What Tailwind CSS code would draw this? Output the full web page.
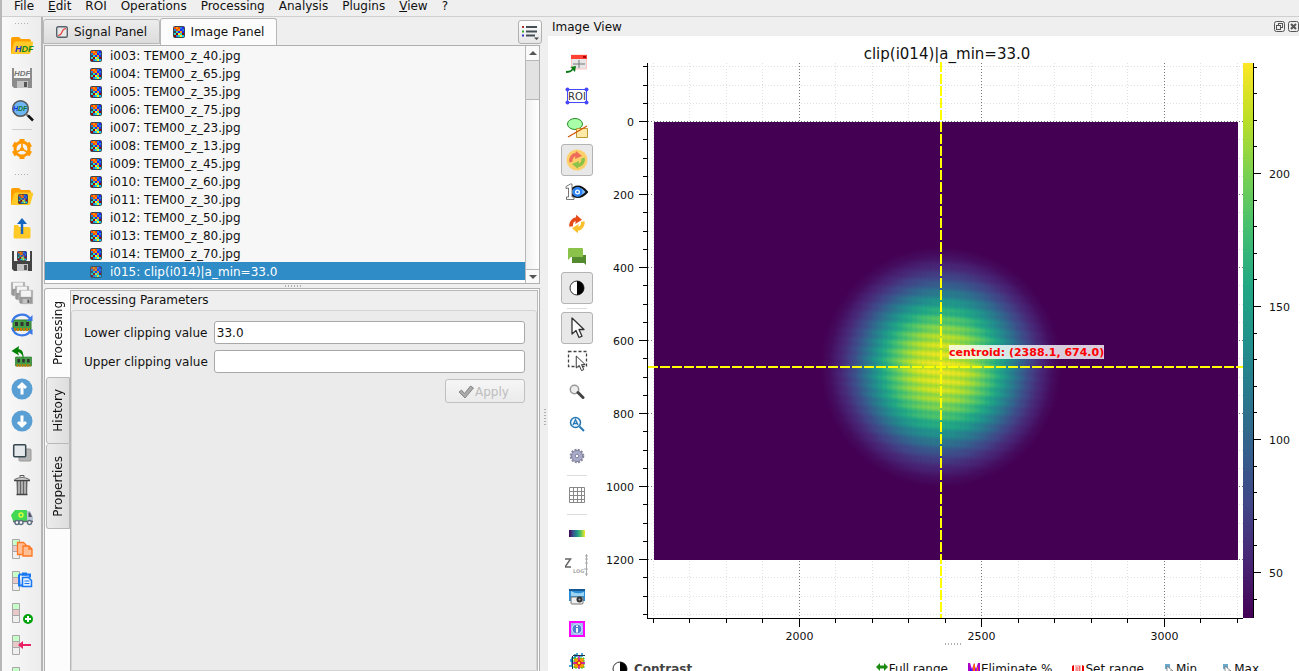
<!DOCTYPE html>
<html lang="en">
<head>
    <meta charset="UTF-8">
    <meta name="viewport" content="width=device-width, initial-scale=1.0">
    <title>DataLab - Image Panel</title>
    <script src="https://cdn.jsdelivr.net/npm/@tailwindcss/browser@4"></script>
</head>
<body class="h-screen overflow-hidden flex flex-col bg-[#efefef] border-l-2 border-[#b8b8b8] font-['DejaVu_Sans',sans-serif] text-xs text-[#111]">

    <!-- Shared icons -->
    <svg class="hidden">
        <symbol id="pixels" viewBox="0 0 12 12">
            <rect width="12" height="12" rx="2" fill="#3a4750"/>
            <path fill="#f40" d="M1 1h2v2H1zM5 1h2v2H5zM3 3h2v2H3z"/>
            <path fill="#f90" d="M3 1h2v2H3zM5 3h2v2H5zM7 5h2v2H7z"/>
            <path fill="#22f" d="M7 3h2v2H7zM9 1h2v2H9zM5 5h2v2H5zM9 5h2v2H9z"/>
            <path fill="#28d" d="M7 1h2v2H7zM9 3h2v2H9zM1 3h2v2H1zM3 9h2v2H3z"/>
            <path fill="#2dc" d="M3 5h2v2H3zM7 7h2v2H7zM1 7h2v2H1zM5 9h2v2H5z"/>
            <path fill="#fe2" d="M5 7h2v2H5zM7 9h2v2H7z"/>
            <path fill="#900" d="M1 9h2v2H1zM9 7h2v2H9zM3 7h2v2H3z"/>
            <path fill="#0cf" d="M9 9h2v2H9z"/>
        </symbol>
        <symbol id="folder" viewBox="0 0 24 24">
            <path d="M1 20V5q0-2 2-2h6l2 2h8q2 0 2 2v2" fill="#ffa000"/>
            <path d="M1 20 4 9q.5-1.500 2-1.500h16q1.500 0 1 2l-2.500 9q-.5 1.500-2 1.500H2q-1 0-1-1" fill="#ffca28"/>
        </symbol>
        <symbol id="stack" viewBox="0 0 24 24">
            <rect x="2.500" y="2.500" width="7" height="6" fill="#c8ffc8"/>
            <rect x="2.500" y="8.500" width="7" height="6" fill="#e8c8c8"/>
            <rect x="2.500" y="14.500" width="7" height="7" fill="#f0f0f0"/>
            <path d="M2.500 2.500h7v19h-7zM2.500 8.500h7M2.500 14.500h7" fill="none" stroke="#a8a8a8"/>
        </symbol>
        <symbol id="floppy" viewBox="0 0 24 24">
            <path d="M2 2h20v20H4l-2-2z" fill="currentColor"/>
            <path d="M4 2h16v10H4z" fill="#f4f4f4"/>
            <path d="M7 15h11v7H7z" fill="#c4c4c4"/>
            <path d="M14 16h3v5h-3z" fill="#555"/>
        </symbol>
        <symbol id="cursor" viewBox="0 0 24 24">
            <path d="M7 2v16l4-3.500 3 7 3-1.300-3-6.700h5z" fill="#fff" stroke="#333" stroke-width="1.300" stroke-linejoin="round"/>
        </symbol>
        <symbol id="ram" viewBox="0 0 24 24">
            <path d="M3 7h18v10H3z" fill="#43a047" stroke="#2e7d32"/>
            <path d="M5 9h3v4H5zM10.500 9h3v4h-3zM16 9h3v4h-3z" fill="#333"/>
            <path d="M4 16.500h16" stroke="#c77800" stroke-width="3" stroke-dasharray="2 1"/>
        </symbol>
    </svg>

    <!-- Menu bar -->
    <nav class="shrink-0 h-[17px] border-b border-[#cfcfcf] pl-3 pb-1 flex gap-[14px] leading-3">
        <button>File</button>
        <button><u>E</u>dit</button>
        <button>ROI</button>
        <button>Operations</button>
        <button>Processing</button>
        <button>Analysis</button>
        <button>Plugins</button>
        <button><u>V</u>iew</button>
        <button>?</button>
    </nav>

    <main class="flex-1 min-h-0 flex">

        <!-- Main toolbar -->
        <aside class="w-[41px] shrink-0 overflow-hidden flex flex-col items-center pt-[5px] bg-linear-to-r from-[#fafafa] to-[#ececec] border-r-2 border-[#b4b4b4] *:shrink-0">
            <div class="h-1 w-4 mb-1 bg-[radial-gradient(#b0b0b0_1px,transparent_1px)] bg-size-[3px_3px]"></div>
            <button aria-label="Open HDF5" class="size-8 grid place-items-center">
                <svg class="size-6"><use href="#folder"/><text x="5" y="18" font-size="9" font-weight="bold" font-style="italic" font-family="Liberation Sans" fill="#1338d8">H<tspan fill="#118822">DF</tspan></text></svg>
            </button>
            <button aria-label="Save HDF5" class="size-8 grid place-items-center text-[#8c8c8c]">
                <svg class="size-6"><use href="#floppy"/><text x="4" y="10" font-size="8" font-weight="bold" font-style="italic" font-family="Liberation Sans" fill="#777">HDF</text></svg>
            </button>
            <button aria-label="Browse HDF5" class="size-8 grid place-items-center">
                <svg class="size-6" viewBox="0 0 24 24"><circle cx="10.500" cy="10.500" r="7.800" fill="#6fb7f2" stroke="#555" stroke-width="1.500"/><path d="m16 16 2 2" stroke="#777" stroke-width="2"/><path d="m18 17.500 5 5" stroke="#111" stroke-width="2.500"/><text x="3" y="13" font-size="7" font-weight="bold" font-style="italic" font-family="Liberation Sans" fill="#1338d8">H<tspan fill="#117733">DF</tspan></text></svg>
            </button>
            <div class="w-5 my-[3px] h-px bg-[#cfcfcf]"></div>
            <button aria-label="Settings" class="size-8 grid place-items-center">
                <svg class="size-6" viewBox="0 0 24 24" fill="none" stroke="#ff9800"><circle cx="12" cy="12" r="7" stroke-width="3"/><path d="M12 5V2M12 22v-3M5.900 8.500 3.300 7M20.700 17l-2.600-1.500M5.900 15.500 3.300 17M20.700 7l-2.600 1.500" stroke-width="5"/><path d="M12 12V6M12 12l5 3M12 12l-5 3" stroke-width="1.700"/><circle cx="12" cy="12" r="1.500" fill="#ff9800"/></svg>
            </button>
            <div class="h-1 w-4 mt-2 mb-1 bg-[radial-gradient(#b0b0b0_1px,transparent_1px)] bg-size-[3px_3px]"></div>
            <button aria-label="Open image" class="size-8 grid place-items-center">
                <svg class="size-6"><use href="#folder"/><use href="#pixels" x="8" y="9" width="10" height="10"/></svg>
            </button>
            <button aria-label="Import" class="size-8 grid place-items-center">
                <svg class="size-6" viewBox="0 0 24 24"><path d="M4 8h4l1 2h10q1.500 0 1.500 1.500V20q0 1.500-1.500 1.500H5Q3.500 21.500 3.500 20z" fill="#ffca28"/><path d="M12 17V5" stroke="#1565c0" stroke-width="2.500"/><path d="m12 1-5 6h10z" fill="#1565c0"/></svg>
            </button>
            <button aria-label="Save image" class="size-8 grid place-items-center text-[#444]">
                <svg class="size-6"><use href="#floppy"/><use href="#pixels" x="7" y="2" width="10" height="10"/></svg>
            </button>
            <button aria-label="Save all" class="size-8 grid place-items-center text-[#999]">
                <svg class="size-6" stroke="#aaa" stroke-width=".5"><use href="#floppy" x="0" y="0" width="16" height="16"/><use href="#floppy" x="4" y="4" width="16" height="16"/><use href="#floppy" x="8" y="8" width="16" height="16"/></svg>
            </button>
            <button aria-label="Reload" class="size-8 grid place-items-center">
                <svg class="size-6" viewBox="0 0 24 24"><use href="#ram"/><path d="M2 9.500A10.300 10.300 0 0 1 20 5.500M21 17A10.300 10.300 0 0 1 2 14.500" fill="none" stroke="#3b78e7" stroke-width="2.200"/><path d="M22.500 2v6h-6z" fill="#3b78e7"/><path d="M22.500 16v6l-5-3z" fill="#3b78e7"/></svg>
            </button>
            <button aria-label="Load from memory" class="size-8 grid place-items-center">
                <svg class="size-6" viewBox="0 0 24 24"><use href="#ram" x="3" y="6" width="21" height="21"/><path d="M13 15Q13 8 8 7l1 3.500L1.500 6 9 1l-.5 3Q15 5 13 15" fill="#008000"/></svg>
            </button>
            <button aria-label="Move up" class="size-8 grid place-items-center">
                <svg class="size-6" viewBox="0 0 24 24"><circle cx="12" cy="12" r="10.500" fill="#5a9fd4"/><path d="M12 17.500V9M8 11l4-4 4 4" fill="none" stroke="#fff" stroke-width="3"/></svg>
            </button>
            <button aria-label="Move down" class="size-8 grid place-items-center">
                <svg class="size-6" viewBox="0 0 24 24"><circle cx="12" cy="12" r="10.500" fill="#5a9fd4"/><path d="M12 6.500V15M8 13l4 4 4-4" fill="none" stroke="#fff" stroke-width="3"/></svg>
            </button>
            <button aria-label="Duplicate" class="size-8 grid place-items-center">
                <svg class="size-6" viewBox="0 0 24 24"><rect x="9" y="8" width="12" height="12" rx="1" fill="#b4b4b4" stroke="#999"/><rect x="3.700" y="3.700" width="12" height="12" rx="1" fill="#e4e8ea" stroke="#37474f" stroke-width="1.500"/></svg>
            </button>
            <button aria-label="Remove" class="size-8 grid place-items-center">
                <svg class="size-6" viewBox="0 0 24 24"><path d="M6 8h12l-1 13H7z" fill="#bbb"/><path d="M7.500 8v13M10.500 8v13M13.500 8v13M16.500 8v13" stroke="#666" stroke-width="1.300"/><path d="M4.500 6.500q7.500-4 15 0" fill="#ddd" stroke="#666"/><path d="M4 7.500h16M6.500 21.500h11" stroke="#444" stroke-width="1.500"/><path d="M10 4V2.500h4V4" stroke="#555" fill="none"/></svg>
            </button>
            <button aria-label="Delete all" class="size-8 grid place-items-center">
                <svg class="size-6" viewBox="0 0 24 24"><path d="M1 10 5 5h12v11H3z" fill="#43d854"/><path d="M17 6h3l3 6v4h-6z" fill="#b8c4d4"/><path d="M18.500 7.500h1.500l2 4.500h-3.500z" fill="#556"/><path d="M3 16.500h20" stroke="#667" stroke-width="1.500"/><circle cx="11" cy="10" r="2" fill="none" stroke="#dfff40" stroke-width="1.300"/><g fill="#fff" stroke="#607080" stroke-width="1.500"><circle cx="7" cy="17.500" r="2"/><circle cx="11" cy="17.500" r="2"/><circle cx="19.500" cy="17.500" r="2"/></g></svg>
            </button>
            <button aria-label="Copy metadata" class="size-8 grid place-items-center">
                <svg class="size-6"><use href="#stack"/><g fill="#ffbe94" stroke="#ff7722" stroke-width="1.300"><path d="M7.500 5.500h6l3 3v9h-9z"/><path d="M13 9h6l3 3v7h-9z"/><path d="M19 9v3h3" fill="none"/></g></svg>
            </button>
            <button aria-label="Paste metadata" class="size-8 grid place-items-center">
                <svg class="size-6"><use href="#stack"/><path d="M9 5.500h11v3M9 5.500V16.500h3" fill="#9cc4ff" stroke="#1877f2" stroke-width="2"/><path d="M12 3.500h5v3h-5z" fill="#1877f2"/><path d="M12.500 8.500h6l3 3v6h-9z" fill="#e4f0ff" stroke="#1877f2" stroke-width="1.500"/><path d="M14.500 12h5M14.500 14.500h5" stroke="#1877f2"/></svg>
            </button>
            <button aria-label="Add metadata" class="size-8 grid place-items-center">
                <svg class="size-6"><use href="#stack"/><circle cx="18" cy="18" r="5" fill="#00a30d"/><path d="M18 15v6M15 18h6" stroke="#fff" stroke-width="2"/></svg>
            </button>
            <button aria-label="Import metadata" class="size-8 grid place-items-center">
                <svg class="size-6"><use href="#stack"/><path d="M21 12H11" stroke="#e91e63" stroke-width="2"/><path d="m8 12 5-4v8z" fill="#e91e63"/></svg>
            </button>
            <button aria-label="Export metadata" class="size-8 grid place-items-center">
                <svg class="size-6"><use href="#stack"/></svg>
            </button>
        </aside>

        <!-- Signal / image panels -->
        <section class="w-[499px] shrink-0 flex flex-col">
            <div class="h-7 shrink-0 flex items-end">
                <button class="h-[25px] w-[117px] mb-px border border-[#b8b8b8] rounded-t-[3px] bg-linear-to-b from-[#ececec] to-[#dcdcdc] flex items-center justify-center gap-[6px]">
                    <svg class="size-3" viewBox="0 0 12 12"><rect x=".7" y=".7" width="10.600" height="10.600" rx="1.500" fill="#e8e8e8" stroke="#56626a" stroke-width="1.400"/><path d="M2 9.500C8 9 4 3 10 2.500" fill="none" stroke="#e04848" stroke-width="1.200"/></svg>
                    Signal Panel
                </button>
                <button class="h-[27px] w-[117px] border border-b-0 border-[#b8b8b8] rounded-t-[3px] bg-[#fcfcfc] flex items-center justify-center gap-[6px]">
                    <svg class="size-3"><use href="#pixels"/></svg>
                    Image Panel
                </button>
                <button aria-label="Panel options" class="ml-auto mb-px size-6 border border-[#b0b0b0] rounded-[3px] bg-linear-to-b from-white to-[#e6e6e6] grid place-items-center">
                    <svg class="size-5" viewBox="0 0 20 20"><path d="M6 5h11M6 9.500h11M6 13.500h9" stroke="#444f55" stroke-width="1.800"/><path d="M2 4h2v2H2z" fill="#a33"/><path d="M2 8.500h2v2H2z" fill="#3a3"/><path d="M2 12.500h2v2H2z" fill="#33c"/><path d="m14 15.500 5 0-2.500 2.500z" fill="#444"/></svg>
                </button>
            </div>

            <div class="h-[239px] shrink-0 mr-[2px] ml-px border border-[#b0b0b0] bg-white flex">
                <ul class="flex-1 *:h-[18px] *:pt-[2px] *:pl-[45px] *:flex *:items-center *:gap-2 odd:*:bg-[#f7f7f7]">
                    <li><svg class="size-3"><use href="#pixels"/></svg>i003: TEM00_z_40.jpg</li>
                    <li><svg class="size-3"><use href="#pixels"/></svg>i004: TEM00_z_65.jpg</li>
                    <li><svg class="size-3"><use href="#pixels"/></svg>i005: TEM00_z_35.jpg</li>
                    <li><svg class="size-3"><use href="#pixels"/></svg>i006: TEM00_z_75.jpg</li>
                    <li><svg class="size-3"><use href="#pixels"/></svg>i007: TEM00_z_23.jpg</li>
                    <li><svg class="size-3"><use href="#pixels"/></svg>i008: TEM00_z_13.jpg</li>
                    <li><svg class="size-3"><use href="#pixels"/></svg>i009: TEM00_z_45.jpg</li>
                    <li><svg class="size-3"><use href="#pixels"/></svg>i010: TEM00_z_60.jpg</li>
                    <li><svg class="size-3"><use href="#pixels"/></svg>i011: TEM00_z_30.jpg</li>
                    <li><svg class="size-3"><use href="#pixels"/></svg>i012: TEM00_z_50.jpg</li>
                    <li><svg class="size-3"><use href="#pixels"/></svg>i013: TEM00_z_80.jpg</li>
                    <li><svg class="size-3"><use href="#pixels"/></svg>i014: TEM00_z_70.jpg</li>
                    <li class="bg-[#308cc6]! text-white"><svg class="size-3 opacity-75"><use href="#pixels"/></svg>i015: clip(i014)|a_min=33.0</li>
                </ul>
                <div class="w-[14px] border-l border-[#b8b8b8] flex flex-col bg-linear-to-r from-[#f0f0f0] to-white">
                    <button aria-label="Scroll up" class="h-[14px] bg-[#fafafa] grid place-items-center"><svg class="w-2 h-1" viewBox="0 0 8 4"><path d="M0 4h8L4 0z" fill="#555"/></svg></button>
                    <div class="h-10 border-y border-[#b8b8b8] bg-[#e2e2e2]"></div>
                    <button aria-label="Scroll down" class="mt-auto h-[14px] border-t border-[#b8b8b8] bg-[#fafafa] grid place-items-center"><svg class="w-2 h-1" viewBox="0 0 8 4"><path d="M0 0h8L4 4z" fill="#555"/></svg></button>
                </div>
            </div>

            <div class="h-1 w-[18px] mx-auto shrink-0 bg-[radial-gradient(#b0b0b0_1px,transparent_1px)] bg-size-[3px_4px]"></div>

            <!-- Object properties -->
            <div class="flex-1 min-h-0 mr-[2px] ml-px border-t border-x border-[#b0b0b0] rounded-tl-[3px] bg-[#fcfcfc] flex">
                <div class="w-[25px] flex flex-col items-end">
                    <button class="w-[25px] h-[88px] grid place-items-center"><span class="[writing-mode:vertical-rl] rotate-180">Processing</span></button>
                    <button class="w-6 h-[67px] border border-[#b8b8b8] rounded-l-[3px] bg-linear-to-r from-[#ececec] to-[#dedede] grid place-items-center"><span class="[writing-mode:vertical-rl] rotate-180">History</span></button>
                    <button class="w-6 h-[85px] border border-t-0 border-[#b8b8b8] rounded-l-[3px] bg-linear-to-r from-[#ececec] to-[#dedede] grid place-items-center"><span class="[writing-mode:vertical-rl] rotate-180">Properties</span></button>
                </div>
                <div class="flex-1 mt-px mr-px border-t border-x border-[#b8b8b8] bg-[#efefef] flex flex-col">
                    <h2 class="h-[19px] pl-px leading-[18px]">Processing Parameters</h2>
                    <form class="flex-1 border border-[#d4d4d4] rounded-t-[3px] bg-[#ebebeb] pt-[10px] pl-3 pr-[11px]">
                        <div class="grid grid-cols-[auto_1fr] items-center gap-x-[6px] gap-y-[6px]">
                            <label for="lower">Lower clipping value</label>
                            <input id="lower" type="text" value="33.0" class="h-[23px] w-full border border-[#a8a8a8] rounded-[3px] bg-white px-[2px]">
                            <label for="upper">Upper clipping value</label>
                            <input id="upper" type="text" class="h-[23px] w-full border border-[#a8a8a8] rounded-[3px] bg-white px-[2px]">
                        </div>
                        <button type="button" disabled class="mt-[6px] ml-auto pt-px pr-[3px] h-6 w-20 border border-[#c0c0c0] rounded-[3px] bg-linear-to-b from-[#f6f6f6] to-[#ebebeb] text-[#bdbdbd] flex items-center justify-center gap-px">
                            <svg class="size-4" viewBox="0 0 16 16"><path d="m1 8 2.500-2 3 3.500L12.500 2 15.500 4 7 14z" fill="#aaa" stroke="#888"/></svg>
                            Apply
                        </button>
                    </form>
                </div>
            </div>
        </section>

        <div class="w-[6px] shrink-0 grid place-items-center">
            <div class="mt-[146px] w-1 h-[18px] bg-[radial-gradient(#b0b0b0_1px,transparent_1px)] bg-size-[4px_3px]"></div>
        </div>

        <!-- Image view -->
        <section class="flex-1 min-w-0 flex flex-col">
            <header class="h-[19px] shrink-0 pl-1 flex items-center gap-[3px]">
                <h2 class="mr-auto">Image View</h2>
                <button aria-label="Float"><svg class="size-[11px]" viewBox="0 0 11 11" fill="none" stroke="#555"><rect x=".5" y=".5" width="10" height="10" rx="2"/><rect x="4.500" y="2.500" width="4" height="4"/><rect x="2.500" y="4.500" width="4" height="4" fill="#efefef"/></svg></button>
                <button aria-label="Close"><svg class="size-[11px]" viewBox="0 0 11 11" fill="none" stroke="#555"><rect x=".5" y=".5" width="10" height="10" rx="2"/><path d="m3 3 5 5M8 3 3 8" stroke-width="2"/></svg></button>
            </header>

            <div class="flex-1 min-h-0 bg-white flex">

                <!-- Plot toolbar -->
                <aside class="w-[58px] shrink-0 overflow-hidden pt-3 flex flex-col items-center *:shrink-0">
                    <button aria-label="Open signal" class="size-8 grid place-items-center">
                        <svg class="size-6" viewBox="0 0 24 24"><path d="M6.500 3h15v14h-15z" fill="#e6e6e6" stroke="#ffc4c4"/><path d="M6 3h16v4H6z" fill="#ff4136"/><path d="M18 4h3v2h-3z" fill="#a00"/><path d="M14 8v8M8 12h12" stroke="#777"/><path d="M1 19q6 0 6-3l-2-1 6-1-1 6-2-2q-2 3-7 3z" fill="#0a7a14"/></svg>
                    </button>
                    <button aria-label="Edit ROI" class="size-8 grid place-items-center">
                        <svg class="size-6" viewBox="0 0 24 24"><path d="M2.500 5.500h19v13h-19z" fill="#fff" stroke="#4848ff"/><g fill="#4848ff"><circle cx="2.500" cy="5.500" r="2"/><circle cx="21.500" cy="5.500" r="2"/><circle cx="2.500" cy="18.500" r="2"/><circle cx="21.500" cy="18.500" r="2"/></g><text x="12" y="16" text-anchor="middle" font-size="10" fill="#333">ROI</text></svg>
                    </button>
                    <button aria-label="Annotations" class="size-8 grid place-items-center">
                        <svg class="size-6" viewBox="0 0 24 24"><ellipse cx="10" cy="8" rx="7.500" ry="5.500" fill="#a8ffa8" stroke="#2a8c2a"/><path d="M11.500 12.500h11v9h-11z" fill="#ffe9a8" stroke="#b89a30"/><path d="M3 21 22 10" stroke="#d45500" stroke-width="1.300"/></svg>
                    </button>
                    <button aria-label="Auto refresh" class="size-8 grid place-items-center border border-[#b4b4b4] rounded-[3px] bg-[#e8e8e8]">
                        <svg class="size-6" viewBox="0 0 24 24"><circle cx="12" cy="12" r="10.500" fill="#ffd06a"/><path d="M6 14A6 6 0 0 1 11 6.500" fill="none" stroke="#ef6c5a" stroke-width="3.500"/><path d="m11 3 6 5-7 3z" fill="#ef6c5a"/><path d="M18 10a6 6 0 0 1-5 7.500" fill="none" stroke="#8bc34a" stroke-width="3.500"/><path d="m13 21-6-5 7-3z" fill="#8bc34a"/></svg>
                    </button>
                    <button aria-label="Show first only" class="size-8 grid place-items-center">
                        <svg class="size-6" viewBox="0 0 24 24"><path d="M4 12q9-11 18 0-9 10-18 0" fill="#7abcff" stroke="#111" stroke-width="2"/><circle cx="12.500" cy="12" r="5" fill="#2c82f0"/><circle cx="12.500" cy="12" r="2.500" fill="#fff"/><circle cx="12.500" cy="12" r="1.200" fill="#2c82f0"/><path d="M1 6.500 5.500 4H7v13h2v2.500H1.500V17h2V8L1 8.500z" fill="#fff" stroke="#555" stroke-width=".8"/></svg>
                    </button>
                    <button aria-label="Refresh" class="size-8 grid place-items-center">
                        <svg class="size-5" viewBox="0 0 24 24"><path d="M5 15A8 8 0 0 1 11 6" fill="none" stroke="#e64a19" stroke-width="4.500"/><path d="m11 1 7 6-8 5z" fill="#e64a19"/><path d="M19 9a8 8 0 0 1-6 9" fill="none" stroke="#fbc02d" stroke-width="4.500"/><path d="m13 23-7-6 8-5z" fill="#fbc02d"/></svg>
                    </button>
                    <button aria-label="Show labels" class="size-8 grid place-items-center">
                        <svg class="size-5" viewBox="0 0 20 20"><path d="M5 9h14v10l-2-2H5z" fill="#558b2f"/><path d="M2 2h13q1 0 1 1v8H4l-3 3V3q0-1 1-1" fill="#8bc34a"/></svg>
                    </button>
                    <button aria-label="Contrast" class="size-8 grid place-items-center border border-[#b4b4b4] rounded-[3px] bg-[#e8e8e8]">
                        <svg class="size-4" viewBox="0 0 16 16"><circle cx="8" cy="8" r="7" fill="#fff" stroke="#333"/><path d="M8 1a7 7 0 0 1 0 14z"/></svg>
                    </button>
                    <div class="w-5 h-px mt-1 mb-[3px] bg-[#dcdcdc]"></div>
                    <button aria-label="Select" class="size-8 grid place-items-center border border-[#b4b4b4] rounded-[3px] bg-[#e8e8e8]">
                        <svg class="size-6"><use href="#cursor"/></svg>
                    </button>
                    <button aria-label="Rectangle select" class="size-8 grid place-items-center">
                        <svg class="size-6"><path d="M3.500 3.500h18v15h-18z" fill="none" stroke="#444" stroke-width="1.300" stroke-dasharray="3 2"/><use href="#cursor" x="6" y="6" width="18" height="19"/></svg>
                    </button>
                    <button aria-label="Zoom" class="size-8 grid place-items-center">
                        <svg class="size-4" viewBox="0 0 16 16"><circle cx="5.500" cy="5.500" r="4.200" fill="#eee" stroke="#999" stroke-width="1.500"/><path d="m9 8.500 5 5" stroke="#444" stroke-width="3" stroke-linecap="round"/></svg>
                    </button>
                    <button aria-label="Auto zoom" class="size-8 grid place-items-center">
                        <svg class="size-4" viewBox="0 0 16 16"><circle cx="6.500" cy="6.500" r="5" fill="#eef6fc" stroke="#2577b5" stroke-width="1.500"/><path d="m10.500 10.500 4.500 4.500" stroke="#2577b5" stroke-width="2"/><path d="m4 9 2.500-5.500L9 9M5 7.500h3" stroke="#2577b5" stroke-width="1.300" fill="none"/></svg>
                    </button>
                    <button aria-label="Plot settings" class="size-8 grid place-items-center">
                        <svg class="size-4" viewBox="0 0 16 16"><circle cx="8" cy="8" r="6.300" fill="none" stroke="#8888a0" stroke-width="2" stroke-dasharray="2 1.300"/><circle cx="8" cy="8" r="5.500" fill="#a9abc8" stroke="#7f829c"/><circle cx="8" cy="8" r="1.800" fill="#fff" stroke="#7f829c"/></svg>
                    </button>
                    <div class="w-5 h-px my-[3px] bg-[#dcdcdc]"></div>
                    <button aria-label="Grid" class="size-8 grid place-items-center">
                        <svg class="size-4" viewBox="0 0 16 16"><path d="M.5.5h15v15H.5zM4.500 0v16M8.500 0v16M12.500 0v16M0 4.500h16M0 8.500h16M0 12.500h16" fill="none" stroke="#888"/></svg>
                    </button>
                    <div class="w-5 h-px mt-[3px] mb-[2px] bg-[#dcdcdc]"></div>
                    <button aria-label="Colormap" class="size-8 grid place-items-center">
                        <span class="w-4 h-[7px] bg-[linear-gradient(to_right,#440154,#3b528b,#21918c,#5ec962,#fde725)]"></span>
                    </button>
                    <button aria-label="Logarithmic scale" class="size-8 grid place-items-center">
                        <svg class="size-6" viewBox="0 0 24 24"><path d="M0 6h5.500L0 14h6" fill="none" stroke="#666" stroke-width="1.500"/><text x="8" y="20" font-size="5" font-weight="bold" fill="#aaa">LOG</text><path d="M21.500 1v22M20 3h3M20 6h3M20 10h3M19 16h4M20 21h3" stroke="#aaa"/></svg>
                    </button>
                    <button aria-label="Snapshot" class="size-8 grid place-items-center">
                        <svg class="size-4" viewBox="0 0 16 16"><path d="M0 0h16v12H0z" fill="#2b8fd8"/><path d="M0 0h16v2H0z" fill="#175a94"/><path d="M2 2q6 4 13 1v4H2z" fill="#9cd4f4"/><path d="M2 8h11q1 0 1 1v5q0 1-1 1H3q-1 0-1-1z" fill="#eee" stroke="#777"/><circle cx="10.500" cy="10.500" r="3" fill="#333"/><circle cx="10.500" cy="10.500" r="1" fill="#aaa"/></svg>
                    </button>
                    <button aria-label="Information" class="size-8 grid place-items-center">
                        <svg class="size-4" viewBox="0 0 16 16"><path d="M1 1h14v14H1z" fill="#9fbcf0" stroke="#f0f" stroke-width="2"/><circle cx="8" cy="8" r="5" fill="#4c7fd0" stroke="#dce8ff"/><path d="M8 7v4.500M8 4.500V6" stroke="#fff" stroke-width="2"/></svg>
                    </button>
                    <button aria-label="Cross section" class="size-8 grid place-items-center">
                        <svg class="size-4" viewBox="0 0 16 16"><path d="M0 13h3V5h3V1M5 3h3V0M10 3h3V0M2 9V6" fill="none" stroke="#18c" stroke-width="1.500"/><path d="M5 5h10v10H5z" fill="#ff9800" stroke="#2c2" stroke-dasharray="2 1"/><path d="M10 3v13M4 10h12" stroke="#c0c" stroke-width="1.300"/><circle cx="10" cy="10" r="2" fill="#fe3" stroke="#d00"/><path d="M4 2.500h12M3.500 3v13" stroke="#234"/></svg>
                    </button>
                </aside>

                <div class="flex-1 min-w-0 flex flex-col">
                    <!-- Plot -->
                    <svg id="plot" class="flex-1 min-h-0 w-full overflow-visible" viewBox="606 36 693 606" font-size="11" fill="#111">
                        <defs>
                            <radialGradient id="beam" gradientUnits="userSpaceOnUse" cx="941" cy="367" r="124">
                                <stop offset="0" stop-color="#ffffff"/>
                                <stop offset=".1" stop-color="#fdfdfd"/>
                                <stop offset=".2" stop-color="#f4f4f4"/>
                                <stop offset=".3" stop-color="#dedede"/>
                                <stop offset=".4" stop-color="#bebebe"/>
                                <stop offset=".5" stop-color="#989898"/>
                                <stop offset=".6" stop-color="#6c6c6c"/>
                                <stop offset=".7" stop-color="#404040"/>
                                <stop offset=".8" stop-color="#202020"/>
                                <stop offset=".9" stop-color="#090909"/>
                                <stop offset=".97" stop-color="#000000"/>
                            </radialGradient>
                            <linearGradient id="fringe" x1="0" y1="0" x2="0" y2="1">
                                <stop offset="0" stop-opacity="0"/>
                                <stop offset=".5" stop-opacity=".11"/>
                                <stop offset="1" stop-opacity="0"/>
                            </linearGradient>
                            <pattern id="rows" width="9" height="9" patternUnits="userSpaceOnUse" patternTransform="rotate(4)">
                                <rect width="9" height="9" fill="url(#fringe)"/>
                            </pattern>
                            <pattern id="cols" width="5" height="5" patternUnits="userSpaceOnUse">
                                <rect width="2" height="5" fill-opacity=".02"/>
                            </pattern>
                            <!-- Grey level to viridis -->
                            <filter id="viridis" x="0" y="0" width="1" height="1" color-interpolation-filters="sRGB">
                                <feComponentTransfer>
                                    <feFuncR type="table" tableValues=".267 .282 .255 .208 .165 .129 .133 .267 .478 .741 .992"/>
                                    <feFuncG type="table" tableValues=".004 .141 .267 .373 .471 .569 .659 .749 .820 .875 .906"/>
                                    <feFuncB type="table" tableValues=".329 .459 .529 .553 .557 .549 .518 .439 .318 .149 .145"/>
                                </feComponentTransfer>
                            </filter>
                            <linearGradient id="colorbar" x1="0" y1="1" x2="0" y2="0">
                                <stop offset="0" stop-color="#440154"/>
                                <stop offset=".1" stop-color="#482475"/>
                                <stop offset=".2" stop-color="#414487"/>
                                <stop offset=".3" stop-color="#355f8d"/>
                                <stop offset=".4" stop-color="#2a788e"/>
                                <stop offset=".5" stop-color="#21918c"/>
                                <stop offset=".6" stop-color="#22a884"/>
                                <stop offset=".7" stop-color="#44bf70"/>
                                <stop offset=".8" stop-color="#7ad151"/>
                                <stop offset=".9" stop-color="#bddf26"/>
                                <stop offset="1" stop-color="#fde725"/>
                            </linearGradient>
                        </defs>

                        <text x="947" y="59" text-anchor="middle" font-size="15">clip(i014)|a_min=33.0</text>
                        <g id="grid" shape-rendering="crispEdges"></g>
                        <g filter="url(#viridis)">
                            <rect x="654" y="122" width="584" height="438" fill="url(#beam)"/>
                            <rect x="654" y="122" width="584" height="438" fill="url(#rows)"/>
                            <rect x="654" y="122" width="584" height="438" fill="url(#cols)"/>
                        </g>
                        <rect x="1243" y="63" width="10" height="555" fill="url(#colorbar)"/>
                        <path d="M941 62V618M648 367H1243" stroke="#ff0" stroke-width="2" stroke-dasharray="10 2"/>
                        <rect x="949" y="345" width="155" height="14" fill="#fff" fill-opacity=".8"/>
                        <text x="949" y="356" font-weight="bold" fill="#f00">centroid: (2388.1, 674.0)</text>
                        <g id="axes" shape-rendering="crispEdges" stroke="#000">
                            <path d="M647.500 63V619M647 618.500H1243M1253.500 63V618" fill="none"/>
                        </g>
                        <g id="labels"></g>
                    </svg>

                    <div class="h-1 w-[18px] mx-auto shrink-0 bg-[radial-gradient(#b0b0b0_1px,transparent_1px)] bg-size-[3px_4px]"></div>

                    <!-- Contrast bar -->
                    <div class="h-[25px] shrink-0 overflow-hidden pt-[15px] pl-[6px] pr-10 flex gap-5">
                        <h3 class="mr-auto h-4 flex items-center gap-[6px] font-bold text-[#444]">
                            <svg class="size-4" viewBox="0 0 16 16"><circle cx="8" cy="8" r="7" fill="#fff" stroke="#333"/><path d="M8 1a7 7 0 0 1 0 14z" fill="#000"/></svg>
                            Contrast
                        </h3>
                        <button class="h-4 flex items-center gap-px"><svg class="size-3" viewBox="0 0 12 12"><path d="m0 4 4-4v2.500h4V0l4 4-4 4V5.500H4V8z" fill="#1c8a10"/><path d="M4 8h4v4H4z" fill="#fa4"/></svg>Full range</button>
                        <button class="h-4 flex items-center gap-px"><svg class="size-3" viewBox="0 0 12 12"><path d="M0 0h2l2 6 2-6 2 6 2-6h2v12H0z" fill="#a0c"/><path d="M5 12V3l2-3v12zM9 12V5l1-2v9z" fill="#f60"/><path d="M2 12V5l2 3v4z" fill="#03f"/></svg>Eliminate %</button>
                        <button class="h-4 flex items-center gap-px"><svg class="size-3" viewBox="0 0 12 12"><path d="M0 12V3l2-1v10zM10 12V2l2 1v9z" fill="#e00"/><path d="M3 2h6v10H3z" fill="#fbb"/><path d="M5 4v8M7.500 3v9" stroke="#f66"/></svg>Set range</button>
                        <button class="h-4 flex items-center"><svg class="size-3" viewBox="0 0 12 12"><path d="M1 1h5v5H1z" fill="#6aa8cc"/><path d="M3 3v8l2-2 2 3 1-1-2-3h3z" fill="#fff" stroke="#777" stroke-width=".8"/></svg>Min</button>
                        <button class="h-4 ml-[5px] flex items-center"><svg class="size-3" viewBox="0 0 12 12"><path d="M1 1h5v5H1z" fill="#6aa8cc"/><path d="M3 3v8l2-2 2 3 1-1-2-3h3z" fill="#fff" stroke="#777" stroke-width=".8"/></svg>Max</button>
                    </div>
                </div>
            </div>
        </section>
    </main>

    <script>
        const NS = 'http://www.w3.org/2000/svg';
        const grid = document.getElementById('grid');
        const axes = document.getElementById('axes');
        const labels = document.getElementById('labels');

        function add(parent, tag, attrs, text) {
            const el = document.createElementNS(NS, tag);
            for (const key in attrs) el.setAttribute(key, attrs[key]);
            if (text !== undefined) el.textContent = text;
            parent.appendChild(el);
        }

        function gridLine(d, major) {
            add(grid, 'path', { d: d, stroke: major ? '#777' : '#e0e0e0', 'stroke-dasharray': '1 2' });
        }

        // Left axis: one minor tick every 50
        for (let v = -150; v <= 1350; v += 50) {
            const y = Math.round(121 + v * 0.365) + 0.5;
            const major = v % 200 === 0;
            gridLine(`M648 ${y}H1243`, major);
            add(axes, 'path', { d: `M${major ? 639 : 643} ${y}H647` });
            if (major) add(labels, 'text', { x: 634, y: y + 4, 'text-anchor': 'end' }, v);
        }

        // Bottom axis: one minor tick every 100
        for (let v = 1600; v <= 3200; v += 100) {
            const x = Math.floor(799 + (v - 2000) * 0.365) + 0.5;
            const major = v % 500 === 0;
            gridLine(`M${x} 63V618`, major);
            add(axes, 'path', { d: `M${x} 619V${major ? 627 : 623}` });
            if (major) add(labels, 'text', { x: x, y: 640, 'text-anchor': 'middle' }, v);
        }

        // Colour axis
        for (let v = 40; v <= 240; v += 10) {
            const y = Math.round(572 - (v - 50) * 2.66) + 0.5;
            const major = v % 50 === 0;
            add(axes, 'path', { d: `M1254 ${y}H${major ? 1261 : 1257}` });
            if (major) add(labels, 'text', { x: 1269, y: y + 4 }, v);
        }
    </script>
</body>
</html>
